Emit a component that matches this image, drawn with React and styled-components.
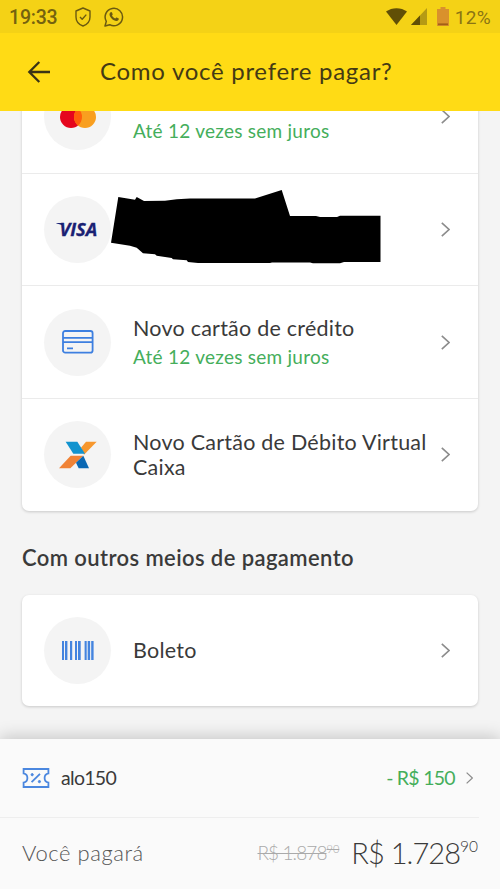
import styled, { createGlobalStyle } from 'styled-components';


const Chevron = ({ size = 15 }) => (
    <svg width={size * 0.6} height={size} viewBox="0 0 9 15" fill="none" stroke="#8c8c8c" strokeWidth="1.6">
        <path d="M0.8 0.8L8 7.5L0.8 14.2" />
    </svg>
)

const BackArrow = () => (
    <svg width="24" height="24" viewBox="0 0 24 24" fill="none" stroke="#3b3415" strokeWidth="2.3">
        <path d="M23 12H2.5M12.3 2L2.3 12L12.3 22" />
    </svg>
)

const ShieldIcon = () => (
    <svg width="16" height="20" viewBox="0 0 16 20" fill="none" stroke="#6b5a10" strokeWidth="1.4" strokeLinejoin="round">
        <path d="M8 1L15 4V10C15 14.5 12 17.6 8 19C4 17.6 1 14.5 1 10V4Z" />
        <path d="M5 10L7.2 12.2L11.3 7.6" />
    </svg>
)

const WhatsappIcon = () => (
    <svg width="20" height="20" viewBox="0 0 20 20">
        <path d="M1 19L2.3 14.4A8.7 8.7 0 1 1 5.7 17.7Z" fill="none" stroke="#6b5a10" strokeWidth="1.5" strokeLinejoin="round" />
        <path d="M6.6 5.2C7.2 4.9 7.7 5 8 5.6L8.7 7.2C8.8 7.6 8.2 8.2 8 8.6C8.7 10 9.8 11 11.3 11.6L12.3 10.5C12.6 10.3 14.3 11.2 14.8 11.5C15 12.7 13.9 14 12.5 14C9.1 13.7 5.9 10.4 5.5 7.4C5.5 6.5 6 5.6 6.6 5.2Z" fill="#6b5a10" />
    </svg>
)

const WifiIcon = () => (
    <svg width="21" height="17" viewBox="0 0 21 17">
        <path d="M0 3.6C6 -1 15 -1 21 3.6L10.5 17Z" fill="#614f06" />
    </svg>
)

const SignalIcon = () => (
    <svg width="16" height="17" viewBox="0 0 16 17">
        <path d="M16 0V17H0Z" fill="#b59a14" />
        <path d="M9 7.4V17H0Z" fill="#614f06" />
    </svg>
)

const BatteryIcon = () => (
    <svg width="12" height="19" viewBox="0 0 12 19">
        <path d="M3.5 0H8.5V2H12V19H0V2H3.5Z" fill="#d9912c" />
        <path d="M1 16.4H11V18.2H1Z" fill="#a35f17" />
    </svg>
)

const MastercardLogo = () => (
    <svg width="36" height="22" viewBox="0 0 36 22">
        <circle cx="11" cy="11" r="11" fill="#e5061d" />
        <circle cx="25" cy="11" r="11" fill="#f99f1f" />
        <path d="M18 2.5A11 11 0 0 1 18 19.5A11 11 0 0 1 18 2.5Z" fill="#ff5f0a" />
    </svg>
)

const VisaLogo = () => (
    <svg width="48" height="30" viewBox="-3 -7 48 30">
        <text x="2.4" y="14.3" textLength="38" lengthAdjust="spacingAndGlyphs" fontFamily="Open Sans, sans-serif" fontWeight="700" fontStyle="italic" fontSize="18.6" fill="#1a2173" stroke="#1a2173" strokeWidth="0.3">VISA</text>
        <path d="M-0.6 1H5.4L6.4 4.3C4.4 2.6 2.4 1.8 -0.6 1.4Z" fill="#1a2173" />
    </svg>
)

const CreditCardIcon = () => (
    <svg width="32" height="24" viewBox="0 0 32 24" fill="none" stroke="#3d7fe0" strokeWidth="1.8">
        <rect x="1" y="1" width="29.6" height="21.6" rx="2.2" />
        <path d="M1 7.9H30.6M1 12.2H30.6M5 18.4H11" />
    </svg>
)

const CaixaLogo = () => (
    <svg width="38" height="28" viewBox="0 0 114 84">
        <path d="M81 2H113L75 41L66 20Z" fill="#f7972d" />
        <path d="M20 2H55L78 38H43Z" fill="#1193cf" />
        <path d="M35 44H73L34 82H0Z" fill="#f08336" />
        <path d="M51 65L73 44L90 82H59Z" fill="#0b68b3" />
    </svg>
)

const BarcodeIcon = () => (
    <svg width="33" height="19" viewBox="0 0 33 19" fill="#4484df">
        <path d="M1 0H3V19H1ZM4 0H6.4V19H4ZM9 0H11.2V19H9ZM14 0H16V19H14ZM17 0H19.7V19H17ZM23.6 0H25.7V19H23.6ZM26.7 0H29.1V19H26.7ZM30.2 0H32.6V19H30.2Z" />
    </svg>
)

const CouponIcon = () => (
    <svg width="28" height="20" viewBox="0 0 28 20" fill="none" stroke="#4b87df" strokeWidth="1.8">
        <path d="M1.6 1H26.4V5.4C24.2 5.8 22.6 7.6 22.6 10C22.6 12.4 24.2 14.2 26.4 14.6V19H1.6V14.6C3.8 14.2 5.4 12.4 5.4 10C5.4 7.6 3.8 5.8 1.6 5.4Z" />
        <path d="M9.6 14.2L18 5.8" />
        <circle cx="10.2" cy="6.7" r="1.1" fill="#4b87df" strokeWidth="1" />
        <circle cx="17.4" cy="13.6" r="1.1" fill="#4b87df" strokeWidth="1" />
    </svg>
)

// black scribble that hides the card number
const Scribble = () => (
    <Redaction width="270" height="74" viewBox="111 190 270 74">
        <path d="M118.3 197L135 199.7L136.7 197L144 201L165 200.7L176.7 199.3L190 198.5H255L281.7 190L290 216H316L320 217H337L340 215.8H380.5V262H344L340 263.2H313L310 262.4H272L270 263H198L188 262L186.7 260.3L173 259.3L171.7 258L156.7 255.7L155 254.3L143 253.3L136.7 247.7L130 245.7L111 242.7Z" />
    </Redaction>
)

const cards = [
    { id: 'master', icon: <MastercardLogo />, title: '', note: 'Até 12 vezes sem juros' },
    { id: 'visa', icon: <VisaLogo />, hidden: true },
    { id: 'credit', icon: <CreditCardIcon />, title: 'Novo cartão de crédito', note: 'Até 12 vezes sem juros' },
    { id: 'caixa', icon: <CaixaLogo />, title: 'Novo Cartão de Débito Virtual Caixa' },
]

const PaymentRow = ({ icon, title, note, hidden, height }) => (
    <Row $height={height}>
        <IconCircle>{icon}</IconCircle>
        {hidden && <Scribble />}
        <RowText>
            {!hidden && <RowTitle>{title}</RowTitle>}
            {note && <RowNote>{note}</RowNote>}
        </RowText>
        <Chevron />
    </Row>
)

const App = () => {
    return (
        <Screen>
            <GlobalStyle />
            <StatusBar>
                <Clock>19:33</Clock>
                <ShieldIcon />
                <WhatsappIcon />
                <StatusRight>
                    <WifiIcon />
                    <SignalIcon />
                    <BatteryIcon />
                    <Battery>12%</Battery>
                </StatusRight>
            </StatusBar>
            <Header>
                <BackArrow />
                <HeaderTitle>Como você prefere pagar?</HeaderTitle>
            </Header>
            <Content>
                <Card $scrolled>
                    {cards.map(card => <PaymentRow key={card.id} {...card} />)}
                </Card>
                <SectionTitle>Com outros meios de pagamento</SectionTitle>
                <Card>
                    <PaymentRow icon={<BarcodeIcon />} title="Boleto" height="111px" />
                </Card>
            </Content>
            <Footer>
                <CouponRow>
                    <CouponIcon />
                    <CouponCode>alo150</CouponCode>
                    <Discount>- R$ 150</Discount>
                    <Chevron size={12} />
                </CouponRow>
                <TotalRow>
                    <TotalLabel>Você pagará</TotalLabel>
                    <OldPrice>R$ 1.878<Cents $size="11px">90</Cents></OldPrice>
                    <Price>R$ 1.728<Cents $size="15.5px">90</Cents></Price>
                </TotalRow>
            </Footer>
        </Screen>
    )
}

export default App;

const GlobalStyle = createGlobalStyle`
    *{
        box-sizing: border-box;
    }

    body{
        margin: 0;
        font-family: Lato, "Open Sans", sans-serif;
        color: #3a3a3a;
    }

    svg{
        display: block;
        flex-shrink: 0;
    }
`;

const Screen = styled.div`
    display: flex;
    flex-direction: column;
    width: 500px;
    height: 889px;
    overflow: hidden;
    background: #f4f4f4;
`;

const StatusBar = styled.div`
    display: flex;
    align-items: center;
    height: 33px;
    padding: 0 9px;
    background: #f4d216;
    font-family: Roboto, sans-serif;
    color: #75620f;

    svg + svg{
        margin-left: 13px;
    }
`;

const Clock = styled.span`
    width: 66px;
    font-size: 19.5px;
    font-weight: 500;
    line-height: 33px;
    padding-top: 2px;
    letter-spacing: -0.2px;
`;

const StatusRight = styled.div`
    display: flex;
    align-items: center;
    margin-left: auto;

    svg + svg{
        margin-left: 4px;
    }

    svg + svg + svg{
        margin-left: 10px;
    }
`;

const Battery = styled.span`
    margin-left: 6px;
    padding-top: 2px;
    font-size: 19px;
    letter-spacing: 0.3px;
    color: #8a7414;
`;

const Header = styled.header`
    display: flex;
    align-items: center;
    height: 78px;
    padding-left: 27px;
    background: #ffdb15;
`;

const HeaderTitle = styled.h1`
    margin: 0 0 0 49px;
    padding-bottom: 3px;
    font-size: 24px;
    font-weight: 400;
    letter-spacing: 0.72px;
    color: #443a14;
`;

const Content = styled.main`
    flex: 1;
    min-height: 0;
    padding: 0 22px;
    overflow: hidden;
`;

const Card = styled.section`
    margin-top: ${props => props.$scrolled ? '-50.6px' : '0'};
    padding-bottom: ${props => props.$scrolled ? '0.6px' : '0'};
    background: #fff;
    border-radius: 7px;
    box-shadow: 0 1px 3px rgba(0, 0, 0, 0.18);
`;

const Row = styled.div`
    position: relative;
    display: flex;
    align-items: center;
    height: ${props => props.$height || '112.5px'};
    padding: 0 28px 0 22px;

    & + &{
        border-top: 1px solid #ebebeb;
    }
`;

const IconCircle = styled.div`
    display: flex;
    align-items: center;
    justify-content: center;
    flex-shrink: 0;
    width: 67px;
    height: 67px;
    border-radius: 50%;
    background: #f4f4f4;
`;

const RowText = styled.div`
    flex: 1;
    margin-left: 22px;
`;

const RowTitle = styled.div`
    min-height: 25px;
    font-size: 21.5px;
    line-height: 25px;
    letter-spacing: 0.24px;
`;

const RowNote = styled.div`
    margin-top: 4px;
    font-size: 19px;
    line-height: 24px;
    letter-spacing: 0.25px;
    color: #45ae5b;
`;

const Redaction = styled.svg`
    position: absolute;
    left: 89px;
    top: 15.6px;
`;

const SectionTitle = styled.h2`
    height: 84px;
    margin: 0;
    padding-top: 34px;
    font-size: 22px;
    font-weight: 600;
    line-height: 26px;
    letter-spacing: 0.4px;
`;

const Footer = styled.footer`
    height: 150px;
    background: #fafafa;
    box-shadow: 0 -2px 16px rgba(0, 0, 0, 0.2);
`;

const CouponRow = styled.div`
    display: flex;
    align-items: center;
    height: 79px;
    margin-right: 21px;
    padding: 0 6px 0 22px;
    border-bottom: 1px solid #eee;
`;

const CouponCode = styled.span`
    margin-left: 11px;
    padding-bottom: 2px;
    font-size: 19.5px;
    letter-spacing: -0.7px;
`;

const Discount = styled.span`
    margin-left: auto;
    margin-right: 11px;
    padding-bottom: 2px;
    font-size: 19.5px;
    letter-spacing: -0.75px;
    color: #45ae5b;
`;

const TotalRow = styled.div`
    display: flex;
    align-items: center;
    height: 69px;
    padding: 0 22px;
`;

const TotalLabel = styled.span`
    margin-right: auto;
    font-size: 22px;
    font-weight: 300;
    letter-spacing: 0.55px;
    color: #555;
`;

const OldPrice = styled.span`
    display: flex;
    align-items: flex-start;
    margin-right: 12px;
    font-size: 19px;
    font-weight: 300;
    line-height: 24px;
    letter-spacing: -0.9px;
    color: #aaa;
    text-decoration: line-through;
`;

const Price = styled.span`
    display: flex;
    align-items: flex-start;
    font-size: 29px;
    font-weight: 300;
    line-height: 36px;
    letter-spacing: -0.95px;
`;

const Cents = styled.span`
    font-size: ${props => props.$size};
    line-height: 1.5;
    letter-spacing: 0;
`;
